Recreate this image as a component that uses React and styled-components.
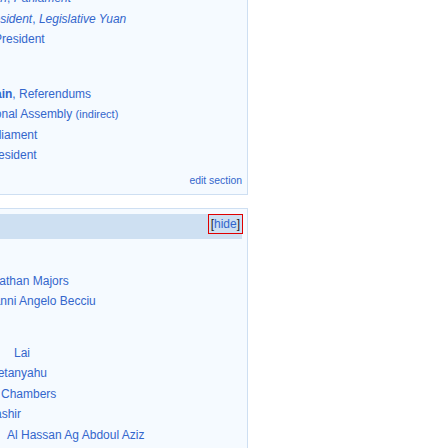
import styled, { createGlobalStyle } from "styled-components";

const GlobalStyle = createGlobalStyle`
  body {
    margin: 0;
    background: #ffffff;
    overflow: hidden;
    font-family: "Liberation Sans", Arial, sans-serif;
  }
`;

const topLines = [
  { shift: -45, parts: [["em", "Chairman"], ["", ", "], ["em", "Parliament"]] },
  { shift: -18.5, parts: [["em", "President"], ["", ", "], ["em", "Legislative Yuan"]] },
  { shift: -6, parts: [["", "President"]] },
];

const electionLines = [
  { shift: -15, parts: [["b", "Main"], ["", ", Referendums"]] },
  { shift: -26.5, parts: [["", "National Assembly "], ["small", "(indirect)"]] },
  { shift: -20, parts: [["", "Parliament"]] },
  { shift: -14, parts: [["", "President"]] },
];

const peopleA = [
  { shift: -20, text: "Jonathan Majors" },
  { shift: -31, text: "Giovanni Angelo Becciu" },
];

const peopleB = [
  { shift: 14, text: "Lai" },
  { shift: -11, text: "Netanyahu" },
  { shift: 1, text: "Chambers" },
  { shift: -13, text: "Bashir" },
  { shift: 7, text: "Al Hassan Ag Abdoul Aziz" },
];

function renderPart([kind, text], i) {
  if (kind === "em") return <Em key={i}>{text}</Em>;
  if (kind === "b") return <Strong key={i}>{text}</Strong>;
  if (kind === "small") return <Small key={i}>{text}</Small>;
  return <span key={i}>{text}</span>;
}

function App() {
  return (
    <>
      <GlobalStyle />
      <Page>
        <Column>
          <TopPanel>
            <Block>
              {topLines.map((line, i) => (
                <Line key={i} $shift={line.shift}>
                  {line.parts.map(renderPart)}
                </Line>
              ))}
            </Block>
            <Block $gap={34}>
              {electionLines.map((line, i) => (
                <Line key={i} $shift={line.shift}>
                  {line.parts.map(renderPart)}
                </Line>
              ))}
            </Block>
            <EditLink>edit section</EditLink>
          </TopPanel>
          <BottomPanel>
            <HeaderBar>
              <HideToggle>
                <Bracket>[</Bracket>hide<Bracket>]</Bracket>
              </HideToggle>
            </HeaderBar>
            <Block $gap={32}>
              {peopleA.map((p) => (
                <Line key={p.text} $shift={p.shift}>
                  {p.text}
                </Line>
              ))}
            </Block>
            <Block $gap={31}>
              {peopleB.map((p) => (
                <Line key={p.text} $shift={p.shift}>
                  {p.text}
                </Line>
              ))}
            </Block>
          </BottomPanel>
        </Column>
      </Page>
    </>
  );
}

export default App;

const Page = styled.div`
  display: flex;
  align-items: stretch;
  height: 448px;
  overflow: hidden;
`;

const Column = styled.div`
  width: 248px;
  display: flex;
  flex-direction: column;
  gap: 13px;
`;

const Panel = styled.div`
  box-sizing: border-box;
  background: #f5faff;
  border-right: 1px solid #cedff2;
  padding-right: 5px;
  overflow: hidden;
`;

const TopPanel = styled(Panel)`
  margin-top: -12px;
  padding-bottom: 7px;
  border-bottom: 1px solid #cedff2;
`;

const BottomPanel = styled(Panel)`
  flex: 1;
  padding-top: 5px;
  border-top: 1px solid #cedff2;
`;

const Block = styled.div`
  margin-top: ${(props) => props.$gap || 0}px;
  display: flex;
  flex-direction: column;
`;

const Line = styled.div`
  margin-left: ${(props) => props.$shift}px;
  white-space: nowrap;
  font-size: 12px;
  line-height: 20.5px;
  color: #3366cc;
`;

const Em = styled.i`
  font-style: italic;
`;

const Strong = styled.b`
  font-weight: bold;
`;

const Small = styled.span`
  font-size: 11px;
`;

const EditLink = styled.div`
  margin-top: 9px;
  text-align: right;
  font-size: 10.4px;
  line-height: 12px;
  color: #3366cc;
`;

const HeaderBar = styled.div`
  height: 25px;
  box-sizing: border-box;
  padding-top: 1px;
  background: #cee0f2;
  display: flex;
  justify-content: flex-end;
  align-items: flex-start;
`;

const HideToggle = styled.span`
  height: 18px;
  padding: 0 2px;
  font-size: 12px;
  line-height: 18px;
  color: #3366cc;
  outline: 1px solid #e00000;
`;

const Bracket = styled.span`
  color: #202122;
`;
